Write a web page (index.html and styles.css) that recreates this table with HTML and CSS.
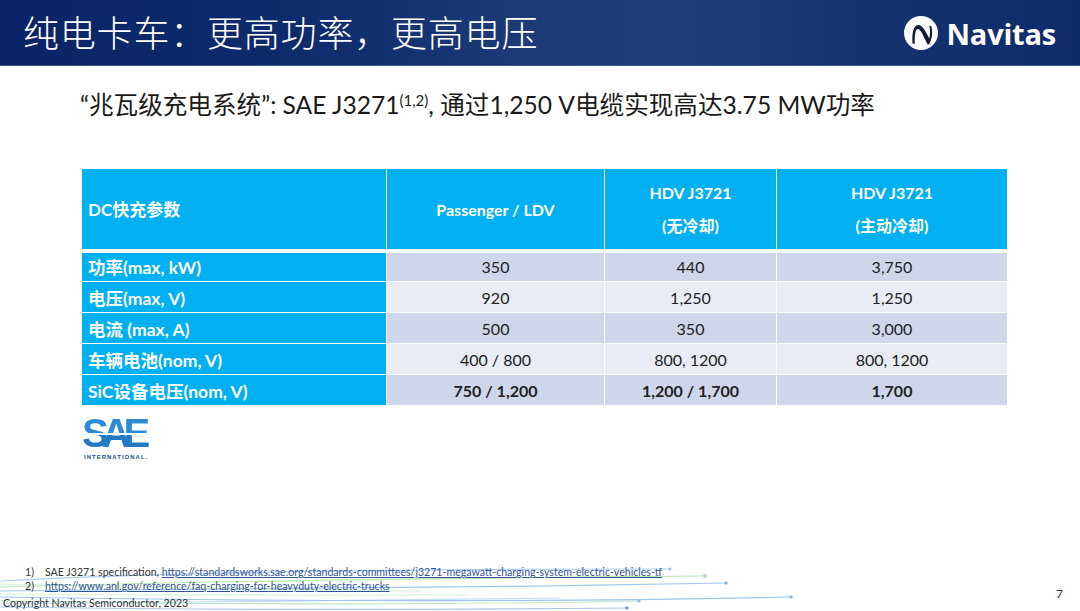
FILE: index.html
```html
<!DOCTYPE html>
<html lang="zh-CN">
<head>
<meta charset="utf-8">
<title>纯电卡车：更高功率，更高电压</title>
<link rel="stylesheet" href="styles.css">
</head>
<body>
<div class="page">
  <header class="topbar">
    <h1 class="title">纯电卡车：更高功率，更高电压</h1>
    <div class="brand">
      <svg class="brand-mark" viewBox="0 0 34 34" width="34" height="34">
        <circle cx="17" cy="17" r="17" fill="#ffffff"/>
        <path d="M8.5 27.5 C8 20 8.6 13 11.5 10.2 C14.5 7.6 18 9.5 21 14.5 L25.3 22.5 C26.2 18.5 26.3 14 25.2 9.6 L27.4 10.6 C28.8 16.5 28 23.5 25.2 28.2 L23.6 28.6 L18.2 17.6 C16 13.2 14 12 12.6 13.6 C11.2 15.4 10.6 21 10.8 27.8 Z" fill="#111a33"/>
      </svg>
      <span class="brand-name">Navitas</span>
    </div>
  </header>

  <p class="subtitle">“兆瓦级充电系统”: SAE J3271<sup>(1,2)</sup>, 通过1,250 V电缆实现高达3.75 MW功率</p>

  <table class="spec">
    <colgroup>
      <col class="c1"><col class="c2"><col class="c3"><col class="c4">
    </colgroup>
    <thead>
      <tr>
        <th class="rowhead">DC快充参数</th>
        <th>Passenger / LDV</th>
        <th>HDV J3721<br>(无冷却)</th>
        <th>HDV J3721<br>(主动冷却)</th>
      </tr>
    </thead>
    <tbody>
      <tr class="dark">
        <th class="rowhead">功率(max, kW)</th><td>350</td><td>440</td><td>3,750</td>
      </tr>
      <tr class="light">
        <th class="rowhead">电压(max, V)</th><td>920</td><td>1,250</td><td>1,250</td>
      </tr>
      <tr class="dark">
        <th class="rowhead">电流 (max, A)</th><td>500</td><td>350</td><td>3,000</td>
      </tr>
      <tr class="light">
        <th class="rowhead">车辆电池(nom, V)</th><td>400 / 800</td><td>800, 1200</td><td>800, 1200</td>
      </tr>
      <tr class="dark strong">
        <th class="rowhead">SiC设备电压(nom, V)</th><td>750 / 1,200</td><td>1,200 / 1,700</td><td>1,700</td>
      </tr>
    </tbody>
  </table>

  <div class="sae">
    <span class="sae-mark">SAE</span>
    <span class="sae-sub">INTERNATIONAL.</span>
  </div>

  <footer class="footer">
    <svg class="swirl" viewBox="0 0 1080 60" width="1080" height="60">
      <g fill="none" stroke-width="1.2" stroke-linecap="round">
        <path d="M0 30 C150 22 400 18 670 18" stroke="#9cc6ea" opacity="0.85"/>
        <path d="M0 36 C200 30 450 27 705 25" stroke="#a8e2a6" opacity="0.85"/>
        <path d="M0 40 C220 38 480 37 726 32" stroke="#8fbde6" opacity="0.85"/>
        <path d="M0 46 C250 50 520 52 791 46" stroke="#8dbbe4" opacity="0.85"/>
        <path d="M0 50 C200 53 450 54 639 50" stroke="#a6dcb0" opacity="0.75"/>
        <path d="M0 56 C200 59 420 59 627 57" stroke="#8ab6e0" opacity="0.75"/>
        <path d="M0 33 C120 36 250 39 420 40" stroke="#b8e6b4" opacity="0.6"/>
        <path d="M0 53 C150 52 350 50 560 47" stroke="#9ec8ec" opacity="0.6"/>
        <path d="M0 43 C160 44 300 45 470 44" stroke="#c4e9c0" opacity="0.6"/>
      </g>
      <g>
        <circle cx="670" cy="18" r="1.6" fill="#9cc6ea"/>
        <circle cx="705" cy="25" r="2" fill="#a8e2a6"/>
        <circle cx="726" cy="32" r="1.8" fill="#8fbde6"/>
        <circle cx="791" cy="46" r="1.8" fill="#8dbbe4"/>
        <circle cx="639" cy="50" r="1.6" fill="#8fbde6"/>
        <circle cx="627" cy="57" r="1.8" fill="#6fa7dc"/>
      </g>
    </svg>
    <div class="notes">
      <ol class="refs">
        <li><span class="num">1)</span><span>SAE J3271 specification, <a href="#">https://standardsworks.sae.org/standards-committees/j3271-megawatt-charging-system-electric-vehicles-tf</a></span></li>
        <li><span class="num">2)</span><a href="#">https://www.anl.gov/reference/faq-charging-for-heavyduty-electric-trucks</a></li>
      </ol>
      <p class="copy">Copyright Navitas Semiconductor, 2023</p>
    </div>
    <span class="pageno">7</span>
  </footer>
</div>
</body>
</html>
```

FILE: styles.css
```css
* { box-sizing: border-box; }
html, body { margin: 0; padding: 0; background: #ffffff; }
body {
  font-family: Lato, "Noto Sans CJK SC", sans-serif;
  color: #222222;
}
.page {
  width: 1080px;
  height: 611px;
  display: flex;
  flex-direction: column;
  overflow: hidden;
  position: relative;
}

/* header */
.topbar {
  height: 66px;
  flex: none;
  display: flex;
  align-items: center;
  justify-content: space-between;
  padding: 0 24px 0 23px;
  background: linear-gradient(90deg, #0b2467 0%, #0f2b6c 28%, #1d3a77 48%, #233f7a 62%, #17336f 80%, #0d2a6b 100%);
  border-bottom: 1px solid #3d5688;
}
.title {
  margin: 0;
  font-family: "Noto Sans CJK SC", sans-serif;
  font-weight: 300;
  font-size: 36px;
  line-height: 1;
  color: #ffffff;
  letter-spacing: 0.8px;
  padding-bottom: 3px;
}
.brand {
  display: flex;
  align-items: center;
  gap: 8px;
  padding-top: 1px;
}
.brand-mark { display: block; }
.brand-name {
  font-family: "Open Sans", sans-serif;
  font-weight: 700;
  font-size: 29px;
  color: #ffffff;
  letter-spacing: -0.2px;
  line-height: 1;
}

/* subtitle */
.subtitle {
  margin: 24px 0 0 80px;
  font-family: Lato, "Noto Sans CJK SC", sans-serif;
  font-size: 24.6px;
  line-height: 30px;
  color: #1a1a1a;
  font-weight: 400;
  white-space: nowrap;
}
.subtitle sup {
  font-size: 15px;
  vertical-align: 8px;
  line-height: 0;
}

/* table */
.spec {
  margin: 48px 0 0 81px;
  width: 926px;
  border-collapse: collapse;
  table-layout: fixed;
  font-family: Lato, "Noto Sans CJK SC", sans-serif;
}
.c1 { width: 305px; }
.c2 { width: 218px; }
.c3 { width: 172px; }
.c4 { width: 231px; }
.spec th, .spec td {
  border: 1px solid #ffffff;
  padding: 0;
  font-size: 16px;
}
.spec thead th {
  background: #00b0f0;
  color: #ffffff;
  font-weight: 700;
  height: 82px;
  line-height: 33px;
  text-align: center;
  border-bottom: 4px solid #ffffff;
  padding-top: 1px;
}
.spec thead th.rowhead { text-align: left; padding-left: 6px; font-size: 17px; }
.spec tbody th.rowhead {
  background: #00b0f0;
  color: #ffffff;
  font-weight: 700;
  text-align: left;
  padding-left: 6px;
  height: 31px;
  font-size: 17.5px;
}
.spec td {
  text-align: center;
  height: 31px;
  color: #222222;
}
.dark td { background: #cfd5ea; }
.light td { background: #e9ebf5; }
.strong td { font-weight: 700; }

/* SAE logo */
.sae {
  margin: 12px 0 0 82px;
  width: 70px;
  display: flex;
  flex-direction: column;
}
.sae-mark {
  font-family: "Liberation Sans", sans-serif;
  font-weight: 700;
  font-size: 40px;
  line-height: 31px;
  height: 31px;
  letter-spacing: -7px;
  background: linear-gradient(180deg, #2d8ad4 0%, #2d8ad4 50%, #ffffff 50%, #ffffff 54%, #2479c4 54%, #2479c4 100%);
  -webkit-background-clip: text;
  background-clip: text;
  color: transparent;
}
.sae-sub {
  font-family: "Liberation Sans", sans-serif;
  font-weight: 700;
  font-size: 6px;
  line-height: 6px;
  letter-spacing: 1px;
  color: #1d4f8a;
  margin: 5px 0 0 2px;
}

/* footer */
.footer {
  margin-top: auto;
  height: 50px;
  flex: none;
  position: relative;
  display: flex;
  justify-content: space-between;
  align-items: flex-start;
}
.swirl {
  position: absolute;
  left: 0;
  bottom: 0;
  z-index: 0;
}
.notes {
  position: relative;
  z-index: 1;
  padding-top: 4px;
  font-family: Lato, "Noto Sans CJK SC", sans-serif;
  font-size: 10.6px;
  color: #333333;
}
.refs {
  list-style: none;
  margin: 0;
  padding: 0 0 0 25px;
}
.refs li {
  display: flex;
  line-height: 14px;
}
.num { width: 20px; flex: none; }
.refs a { color: #2f5597; text-decoration: underline; }
.copy {
  margin: 4px 0 0 3px;
  font-size: 10.6px;
  line-height: 12px;
  color: #333333;
}
.pageno {
  position: relative;
  z-index: 1;
  font-family: Lato, sans-serif;
  font-size: 12px;
  color: #333333;
  margin: 25px 17px 0 0;
}
```
